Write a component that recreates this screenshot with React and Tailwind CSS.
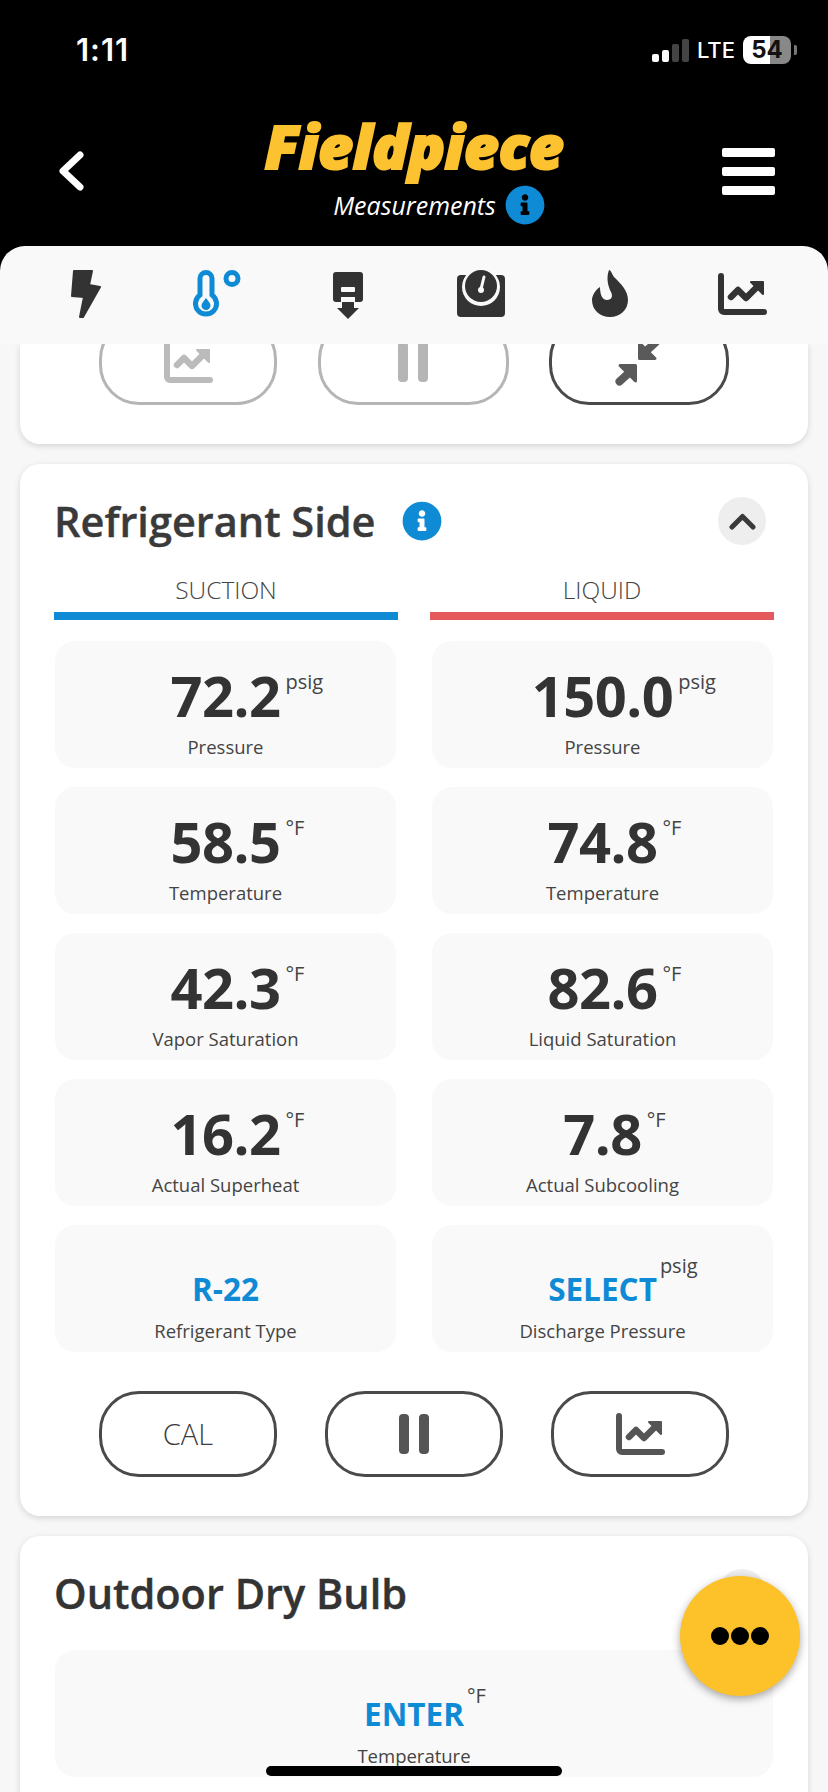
import { FaInfoCircle } from 'react-icons/fa';

const font = { sans: "font-['Open_Sans',sans-serif]" };

function ChartIcon({ color = '#333333' }) {
  return (
    <svg width="49" height="42" viewBox="0 0 49 42" fill="none" stroke={color} strokeLinecap="round" strokeLinejoin="round">
      <path d="M3 3V36a3 3 0 0 0 3 3H46" strokeWidth="6" />
      <path d="M13 24L20 17L28 25L38 15" strokeWidth="6.5" />
      <path d="M33 9H45V21Z" fill={color} strokeWidth="2" />
    </svg>
  );
}

function PauseIcon({ color }) {
  return (
    <svg width="30" height="40" viewBox="0 0 30 40" fill={color}>
      <rect x="0" y="0" width="10" height="40" rx="4" />
      <rect x="20" y="0" width="10" height="40" rx="4" />
    </svg>
  );
}

function CompressIcon() {
  const arrow = (
    <>
      <path d="M-19 3.5H-3.5V19Z" fill="#5a5a5a" stroke="#5a5a5a" strokeWidth="3" strokeLinejoin="round" />
      <path d="M-8 9L-19.5 19.5" stroke="#5a5a5a" strokeWidth="8" strokeLinecap="round" />
    </>
  );
  return (
    <svg width="52" height="52" viewBox="-26 -26 52 52">
      {arrow}
      <g transform="rotate(180) translate(3 0)">{arrow}</g>
    </svg>
  );
}

function InfoIcon() {
  return <FaInfoCircle className="text-[#0f8bd6] w-[40px] h-[40px]" />;
}

function Chevron() {
  return (
    <div className="w-[48px] h-[48px] rounded-full bg-[#eeeeee] flex items-center justify-center">
      <svg width="27" height="17" viewBox="0 0 27 17" fill="none" stroke="#3a3a3a" strokeWidth="5" strokeLinecap="round" strokeLinejoin="round">
        <path d="M3 14L13.5 3.5L24 14" />
      </svg>
    </div>
  );
}

function TabIcons() {
  return (
    <div className="h-[98px] bg-[#f9f9f9] rounded-t-[25px] pl-[71px] pt-[24px] flex items-start">
      {/* bolt */}
      <svg width="30" height="48" viewBox="0 0 30 48" fill="#333333" stroke="#333333" strokeWidth="2" strokeLinejoin="round">
        <path d="M3 1H21L18 15L29 17L12 47L9 47L13 27L1 26Z" />
      </svg>
      {/* temperature */}
      <svg width="48" height="48" viewBox="0 0 48 48" fill="none" stroke="#0f8bd6" strokeWidth="5" className="ml-[92px]">
        <path d="M7 8.5a6 6 0 0 1 12 0V25a10.5 10.5 0 1 1 -12 0Z" />
        <circle cx="39" cy="8.5" r="6" />
        <path d="M13 28C15 31 17.5 33 17.5 35.5A4.5 4.5 0 0 1 8.5 35.5C8.5 33 11 31 13 28Z" fill="#0f8bd6" stroke="none" />
      </svg>
      {/* probe */}
      <svg width="30" height="48" viewBox="0 0 30 48" fill="#333333" className="ml-[92px] mt-[2px]">
        <rect x="0" y="0" width="30" height="30" rx="3" />
        <rect x="8" y="15" width="14" height="5" rx="1" fill="#f9f9f9" />
        <rect x="8" y="25" width="14" height="5" fill="#f9f9f9" />
        <rect x="9" y="30" width="12" height="7" />
        <path d="M4 36H26L15 47Z" />
      </svg>
      {/* scale */}
      <svg width="48" height="48" viewBox="0 0 48 48" className="ml-[94px]">
        <rect x="0" y="5" width="48" height="42" rx="4" fill="#333333" />
        <circle cx="24" cy="17" r="19" fill="#f9f9f9" />
        <circle cx="24" cy="16" r="16" fill="#333333" />
        <path d="M24 19L27 7" stroke="#f9f9f9" strokeWidth="3" strokeLinecap="round" />
        <circle cx="24" cy="20" r="3" fill="#f9f9f9" />
      </svg>
      {/* flame */}
      <svg width="36" height="48" viewBox="0 0 36 48" fill="#333333" className="ml-[87px]">
        <path d="M17 0C19 0 20 4 22 7C28 13 36 20 36 30C36 40 28 47 18 47C8 47 0 40 0 30C0 26 3 20 8 17C8 24 10 30 15 30C20 30 21 26 19 22C16 16 14 8 17 0Z" />
      </svg>
      <div className="ml-[90px] mt-[3px]">
        <ChartIcon />
      </div>
    </div>
  );
}

function Tile({ value, unit, label, accent, unitHigh }) {
  return (
    <div className="h-[127px] rounded-[20px] bg-[#f9f9f9] flex flex-col items-center">
      {accent ? (
        <div className="relative mt-[36px] text-[31.5px] leading-[56px] font-bold text-[#0f8bd6]">
          {value}
          {unit && <span className={`absolute left-full ml-[3px] text-[20px] leading-[24px] font-normal text-[#444444] ${unitHigh}`}>{unit}</span>}
        </div>
      ) : (
        <div className="relative mt-[26px] text-[56px] leading-[56px] font-bold text-[#333333] tracking-[-0.5px]">
          {value}
          <span className="absolute left-full top-[3px] ml-[5px] text-[20px] leading-[24px] font-normal tracking-normal text-[#444444]">{unit}</span>
        </div>
      )}
      <div className="mt-auto mb-[9px] text-[18.5px] leading-[24px] font-medium text-[#444444]">{label}</div>
    </div>
  );
}

function PillButton({ width, muted, children }) {
  return (
    <div className={`h-[86px] rounded-[40px] border-[3px] flex items-center justify-center ${width} ${muted ? 'border-[#b5b5b5]' : 'border-[#4a4a4a]'}`}>
      {children}
    </div>
  );
}

const rows = [
  ['72.2', 'psig', 'Pressure', '150.0', 'psig', 'Pressure'],
  ['58.5', '°F', 'Temperature', '74.8', '°F', 'Temperature'],
  ['42.3', '°F', 'Vapor Saturation', '82.6', '°F', 'Liquid Saturation'],
  ['16.2', '°F', 'Actual Superheat', '7.8', '°F', 'Actual Subcooling'],
];

export default function App() {
  return (
    <div className={`relative w-[828px] h-[1792px] overflow-hidden bg-black flex flex-col ${font.sans}`}>
      {/* Header */}
      <div className="h-[246px] shrink-0 text-white">
        <div className="h-[100px] pl-[76px] pr-[37px] pt-[32px] flex justify-between items-start">
          <span className="font-['Inter',sans-serif] text-[31px] leading-[36px] font-semibold tracking-[1px]">1:11</span>
          <div className="flex items-center h-[36px] font-['Inter',sans-serif]">
            <svg width="38" height="24" viewBox="0 0 38 24" className="mr-[7px] mt-[2px]">
              <rect x="0" y="15" width="7" height="8" rx="2" fill="#ffffff" />
              <rect x="10" y="11" width="7" height="12" rx="2" fill="#ffffff" />
              <rect x="20" y="5" width="7" height="18" rx="2" fill="#444444" />
              <rect x="30" y="0" width="7" height="23" rx="2" fill="#444444" />
            </svg>
            <span className="text-[22px] leading-[28px] font-medium mr-[8px]">LTE</span>
            <div className="relative w-[48px] h-[28px] rounded-[8px] bg-[linear-gradient(90deg,#ffffff_57%,#888888_57%)] flex items-center justify-center text-[24px] leading-[28px] font-bold text-[#111111]">
              54
              <span className="absolute left-full ml-[3px] w-[3px] h-[10px] rounded-r-[2px] bg-[#777777]" />
            </div>
          </div>
        </div>
        <div className="pl-[58px] pr-[53px] flex justify-between items-start">
          <div className="w-[53px]">
            <svg width="26" height="40" viewBox="0 0 26 40" fill="none" stroke="#ffffff" strokeWidth="7" strokeLinecap="round" strokeLinejoin="round" className="mt-[51px]">
              <path d="M22 4L5 20L22 36" />
            </svg>
          </div>
          <div className="flex flex-col items-center mt-[14px]">
            <div className="-ml-[5px] text-[61px] leading-[64px] font-extrabold italic text-[#fdc22f] tracking-[-0.6px] [-webkit-text-stroke:2px_#fdc22f]">Fieldpiece</div>
            <div className="relative -ml-[4px] mt-[11px] text-[25px] leading-[32px] italic text-white">
              Measurements
              <span className="absolute left-full top-[-4px] ml-[9px]">
                <InfoIcon />
              </span>
            </div>
          </div>
          <div className="mt-[48px] w-[53px] flex flex-col gap-[10px]">
            <div className="h-[9px] rounded-[2px] bg-white" />
            <div className="h-[9px] rounded-[2px] bg-white" />
            <div className="h-[9px] rounded-[2px] bg-white" />
          </div>
        </div>
      </div>

      <TabIcons />

      {/* Scrolling content */}
      <div className="flex-1 overflow-hidden bg-[#f7f7f7] px-[20px] flex flex-col gap-[20px]">
        <div className="shrink-0 bg-white rounded-b-[20px] shadow-[0_2px_6px_rgba(0,0,0,0.14)] px-[79px] pb-[39px] flex justify-between">
          <div className="-mt-[25px] flex justify-between w-full">
            <PillButton width="w-[178px]" muted>
              <ChartIcon color="#bbbbbb" />
            </PillButton>
            <PillButton width="w-[191px]" muted>
              <PauseIcon color="#b5b5b5" />
            </PillButton>
            <PillButton width="w-[180px]">
              <CompressIcon />
            </PillButton>
          </div>
        </div>

        <div className="shrink-0 bg-white rounded-[20px] shadow-[0_2px_6px_rgba(0,0,0,0.14)] pt-[33px] pb-[39px]">
          <div className="pl-[34px] pr-[42px] flex items-center h-[48px]">
            <h2 className="text-[41.5px] leading-[48px] font-semibold text-[#3a3a3a] [-webkit-text-stroke:0.4px_#3a3a3a]">Refrigerant Side</h2>
            <span className="ml-[26px] flex">
              <InfoIcon />
            </span>
            <div className="ml-auto">
              <Chevron />
            </div>
          </div>

          <div className="mt-[29px] px-[34px] grid grid-cols-2 gap-x-[32px]">
            <div>
              <div className="text-center text-[24.5px] leading-[32px] font-light text-[#444444]">SUCTION</div>
              <div className="mt-[6px] h-[8px] bg-[#0f8bd6]" />
            </div>
            <div>
              <div className="text-center text-[24.5px] leading-[32px] font-light text-[#444444]">LIQUID</div>
              <div className="mt-[6px] h-[8px] bg-[#e45a5a]" />
            </div>
          </div>

          <div className="mt-[21px] px-[35px] grid grid-cols-2 gap-x-[36px] gap-y-[19px]">
            {rows.map((r) => (
              <div key={r[2] + r[0]} className="contents">
                <Tile value={r[0]} unit={r[1]} label={r[2]} />
                <Tile value={r[3]} unit={r[4]} label={r[5]} />
              </div>
            ))}
            <Tile accent value="R-22" label="Refrigerant Type" />
            <Tile accent value="SELECT" unit="psig" label="Discharge Pressure" unitHigh="-top-[7px]" />
          </div>

          <div className="mt-[39px] px-[79px] flex justify-between">
            <PillButton width="w-[178px]">
              <span className="text-[29px] leading-[36px] font-light text-[#3c3c3c]">CAL</span>
            </PillButton>
            <PillButton width="w-[178px]">
              <PauseIcon color="#555555" />
            </PillButton>
            <PillButton width="w-[178px]">
              <ChartIcon color="#555555" />
            </PillButton>
          </div>
        </div>

        <div className="shrink-0 bg-white rounded-[20px] shadow-[0_2px_6px_rgba(0,0,0,0.14)] pt-[33px] pb-[39px]">
          <div className="pl-[34px] pr-[42px] flex items-center justify-between h-[48px]">
            <h2 className="text-[41.5px] leading-[48px] font-semibold text-[#333333] [-webkit-text-stroke:0.4px_#333333]">Outdoor Dry Bulb</h2>
            <Chevron />
          </div>
          <div className="mt-[33px] px-[35px]">
            <Tile accent value="ENTER" unit="°F" label="Temperature" unitHigh="-top-[2px]" />
          </div>
        </div>
      </div>

      {/* Floating action button */}
      <div className="absolute left-[680px] top-[1576px] w-[120px] h-[120px] rounded-full bg-[#fdc22a] shadow-[0_3px_8px_rgba(0,0,0,0.35)] flex items-center justify-center gap-[2px]">
        <span className="w-[18px] h-[18px] rounded-full bg-black" />
        <span className="w-[18px] h-[18px] rounded-full bg-black" />
        <span className="w-[18px] h-[18px] rounded-full bg-black" />
      </div>

      {/* Home indicator */}
      <div className="absolute left-[266px] top-[1766px] w-[296px] h-[10px] rounded-full bg-black" />
    </div>
  );
}
